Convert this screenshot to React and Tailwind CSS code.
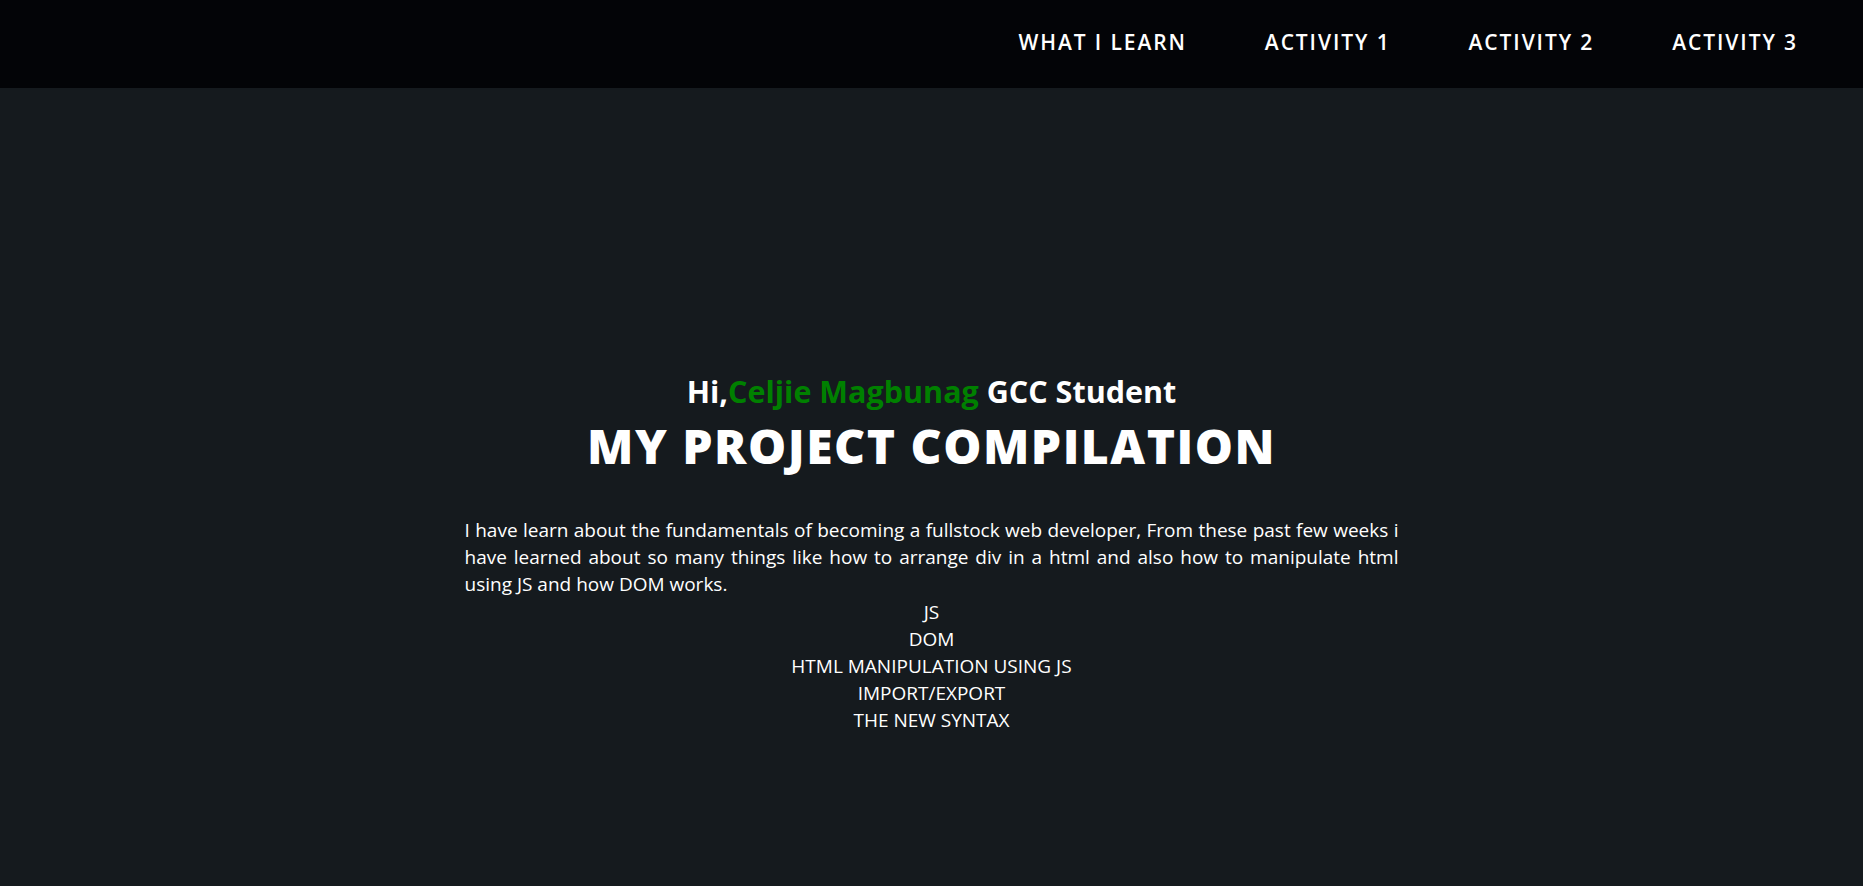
import React from 'react';

const links = ['WHAT I LEARN', 'ACTIVITY 1', 'ACTIVITY 2', 'ACTIVITY 3'];

const topics = ['JS', 'DOM', 'HTML MANIPULATION USING JS', 'IMPORT/EXPORT', 'THE NEW SYNTAX'];

const App = () => {
  return (
    <div className="min-h-screen bg-[#151a1e] text-white font-['Open_Sans',sans-serif]">
      <nav className="h-[88px] bg-[#030407] flex items-center justify-end pr-[65px]">
        <ul className="flex items-center gap-[78px]">
          {links.map((l) => (
            <li key={l}>
              <a href="#" className="text-[21px] font-semibold tracking-[1.9px] leading-none">
                {l}
              </a>
            </li>
          ))}
        </ul>
      </nav>

      <main className="flex flex-col items-center pt-[283px] pb-20">
        <h2 className="text-[30.5px] leading-[40px] font-bold">
          Hi,<span className="text-[#008000]">Celjie Magbunag</span> GCC Student
        </h2>
        <h1 className="mt-[7px] text-[48px] leading-[56px] font-black tracking-[1.5px]">MY PROJECT COMPILATION</h1>

        <p className="mt-[43px] w-[934px] text-[19px] leading-[27px] text-justify">
          I have learn about the fundamentals of becoming a fullstock web developer, From these past few weeks i have
          learned about so many things like how to arrange div in a html and also how to manipulate html using JS and
          how DOM works.
        </p>
        <ul className="mt-px text-[19px] leading-[27px] text-center">
          {topics.map((t) => (
            <li key={t}>{t}</li>
          ))}
        </ul>
      </main>
    </div>
  );
};

export default App;
